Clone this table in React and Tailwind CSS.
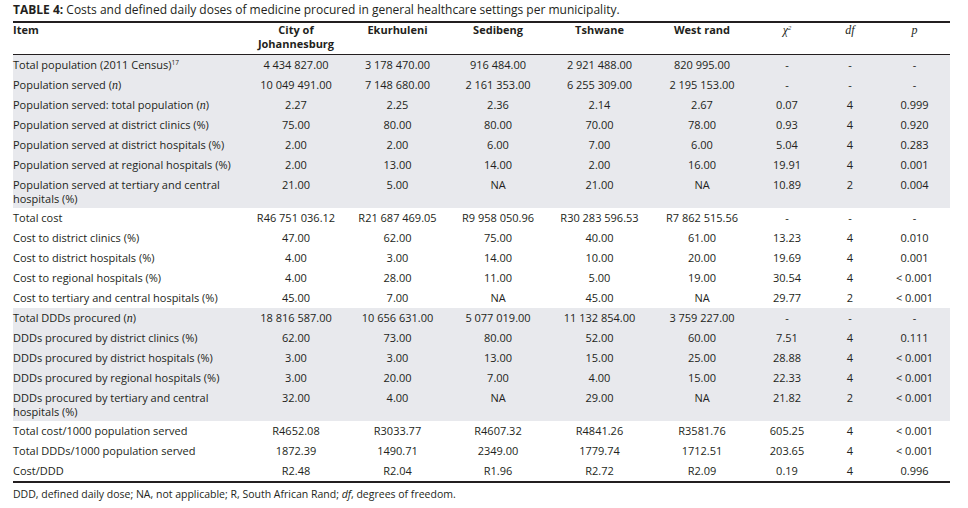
import React from 'react';

const COLS = 'grid grid-cols-[232px_102px_101px_100px_103px_102px_68px_58px_71px]';

const N = () => <i className="font-['Liberation_Serif',serif] text-[12px] leading-none">n</i>;
const Sup = ({ children }) => <span className="relative -top-[4px] text-[6.5px] leading-none">{children}</span>;

// groups of rows, shaded alternately
const GROUPS = [
  {
    shaded: true,
    rows: [
      [<>Total population (2011 Census)<Sup>17</Sup></>, '4 434 827.00', '3 178 470.00', '916 484.00', '2 921 488.00', '820 995.00', '-', '-', '-'],
      [<>Population served (<N />)</>, '10 049 491.00', '7 148 680.00', '2 161 353.00', '6 255 309.00', '2 195 153.00', '-', '-', '-'],
      [<>Population served: total population (<N />)</>, '2.27', '2.25', '2.36', '2.14', '2.67', '0.07', '4', '0.999'],
      ['Population served at district clinics (%)', '75.00', '80.00', '80.00', '70.00', '78.00', '0.93', '4', '0.920'],
      ['Population served at district hospitals (%)', '2.00', '2.00', '6.00', '7.00', '6.00', '5.04', '4', '0.283'],
      ['Population served at regional hospitals (%)', '2.00', '13.00', '14.00', '2.00', '16.00', '19.91', '4', '0.001'],
      [['Population served at tertiary and central', 'hospitals (%)'], '21.00', '5.00', 'NA', '21.00', 'NA', '10.89', '2', '0.004'],
    ],
  },
  {
    shaded: false,
    rows: [
      ['Total cost', 'R46 751 036.12', 'R21 687 469.05', 'R9 958 050.96', 'R30 283 596.53', 'R7 862 515.56', '-', '-', '-'],
      ['Cost to district clinics (%)', '47.00', '62.00', '75.00', '40.00', '61.00', '13.23', '4', '0.010'],
      ['Cost to district hospitals (%)', '4.00', '3.00', '14.00', '10.00', '20.00', '19.69', '4', '0.001'],
      ['Cost to regional hospitals (%)', '4.00', '28.00', '11.00', '5.00', '19.00', '30.54', '4', '< 0.001'],
      ['Cost to tertiary and central hospitals (%)', '45.00', '7.00', 'NA', '45.00', 'NA', '29.77', '2', '< 0.001'],
    ],
  },
  {
    shaded: true,
    rows: [
      [<>Total DDDs procured (<N />)</>, '18 816 587.00', '10 656 631.00', '5 077 019.00', '11 132 854.00', '3 759 227.00', '-', '-', '-'],
      ['DDDs procured by district clinics (%)', '62.00', '73.00', '80.00', '52.00', '60.00', '7.51', '4', '0.111'],
      ['DDDs procured by district hospitals (%)', '3.00', '3.00', '13.00', '15.00', '25.00', '28.88', '4', '< 0.001'],
      ['DDDs procured by regional hospitals (%)', '3.00', '20.00', '7.00', '4.00', '15.00', '22.33', '4', '< 0.001'],
      [['DDDs procured by tertiary and central', 'hospitals (%)'], '32.00', '4.00', 'NA', '29.00', 'NA', '21.82', '2', '< 0.001'],
    ],
  },
  {
    shaded: false,
    rows: [
      ['Total cost/1000 population served', 'R4652.08', 'R3033.77', 'R4607.32', 'R4841.26', 'R3581.76', '605.25', '4', '< 0.001'],
      ['Total DDDs/1000 population served', '1872.39', '1490.71', '2349.00', '1779.74', '1712.51', '203.65', '4', '< 0.001'],
      ['Cost/DDD', 'R2.48', 'R2.04', 'R1.96', 'R2.72', 'R2.09', '0.19', '4', '0.996'],
    ],
  },
];

function Row({ cells, shaded }) {
  // a label given as two lines makes the row taller
  const tall = Array.isArray(cells[0]);
  return (
    <div className={`${COLS} ${tall ? 'h-[33px]' : 'h-5'} ${shaded ? 'bg-[#e8e9ed]' : 'bg-white'}`}>
      {cells.map((c, i) => (
        <div
          key={i}
          className={`whitespace-nowrap ${tall ? 'pt-[2.5px] leading-[14px]' : 'pt-[3px] leading-[13px]'} ${i === 0 ? 'text-left' : 'text-center'}`}
        >
          {tall && i === 0 ? (
            <>
              <div>{c[0]}</div>
              <div>{c[1]}</div>
            </>
          ) : (
            c
          )}
        </div>
      ))}
    </div>
  );
}

export default function App() {
  return (
    <div className="w-[968px] h-[508px] bg-white pl-[13px] pt-[3px] text-[#231f20] font-['Open_Sans','Liberation_Sans',sans-serif] text-[11px]">
      <div className="text-[12px] leading-[14px]">
        <span className="font-bold">TABLE 4:</span> Costs and defined daily doses of medicine procured in general healthcare settings per municipality.
      </div>

      <div className="mt-[4px] w-[937px] border-t-2 border-b-2 border-[#231f20]">
        {/* header */}
        <div className={`${COLS} border-b border-[#231f20] font-bold h-[32px]`}>
          <div className="leading-[14px]">Item</div>
          <div className="leading-[14px] text-center">
            <div>City of</div>
            <div>Johannesburg</div>
          </div>
          <div className="leading-[14px] text-center">Ekurhuleni</div>
          <div className="leading-[14px] text-center">Sedibeng</div>
          <div className="leading-[14px] text-center">Tshwane</div>
          <div className="leading-[14px] text-center">West rand</div>
          <div className="leading-[14px] text-center font-normal italic font-['Liberation_Serif',serif] text-[12px]">χ<Sup>2</Sup></div>
          <div className="leading-[14px] text-center font-normal italic font-['Liberation_Serif',serif] text-[12px]">df</div>
          <div className="leading-[14px] text-center font-normal italic font-['Liberation_Serif',serif] text-[12px]">p</div>
        </div>

        {GROUPS.map((g, gi) =>
          g.rows.map((r, ri) => <Row key={`${gi}-${ri}`} cells={r} shaded={g.shaded} />)
        )}
      </div>

      <div className="mt-[5px] text-[10.5px] leading-[13px]">
        DDD, defined daily dose; NA, not applicable; R, South African Rand; <i>df</i>, degrees of freedom.
      </div>
    </div>
  );
}
